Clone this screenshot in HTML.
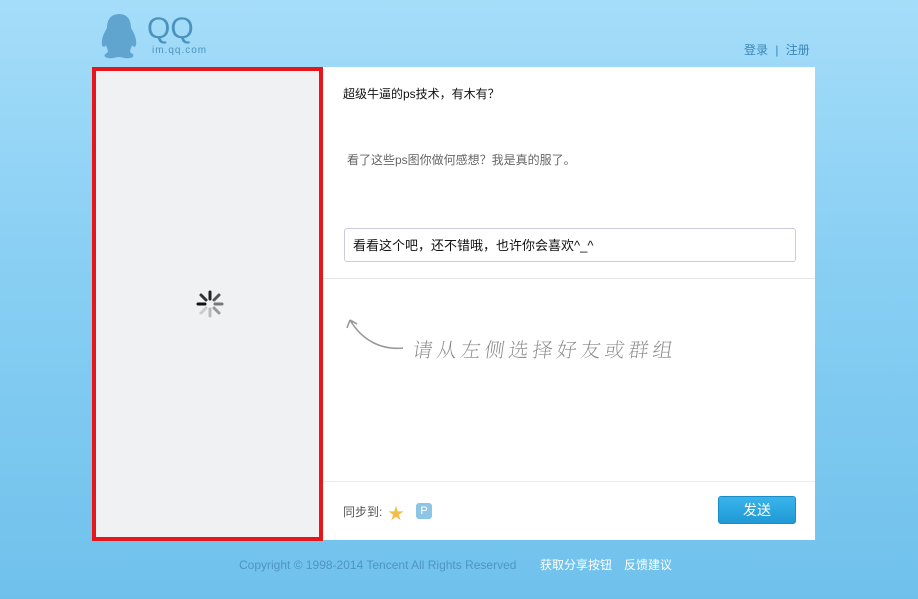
<!DOCTYPE html>
<html><head><meta charset="utf-8"><style>
*{margin:0;padding:0;box-sizing:border-box}
body{width:918px;height:599px;overflow:hidden;position:relative;background:linear-gradient(#a5ddf9,#8bd0f4 40%,#6fc1ec);font-family:"Liberation Sans","Noto Sans CJK SC",sans-serif;font-size:12px}
.abs{position:absolute}
</style></head><body>
<svg class="abs" style="left:98px;top:13px" width="42" height="46" viewBox="0 0 42 46"><path d="M21 1C12 1 9 8 9 15C6 20 3 26 4 32C5 35 7 34 8 32C9 36 11 38 9 40C6 41 5 44 10 45C14 46 18 44 21 44C24 44 28 46 32 45C37 44 36 41 33 40C31 38 33 36 34 32C35 34 37 35 38 32C39 26 36 20 33 15C33 8 30 1 21 1Z" fill="#5fa5cf"/></svg>
<div class="abs" style="left:147px;top:12px;font-size:30px;color:#4b93bf">QQ</div>
<div class="abs" style="left:152px;top:45px;font-size:10px;color:#4b93bf;letter-spacing:1px">im.qq.com</div>
<div class="abs" style="left:744px;top:41px;color:#3a86b8;font-size:12px">登录 <span style="margin:0 4px">|</span> 注册</div>
<div class="abs" style="left:92px;top:67px;width:723px;height:473px;background:#fff"></div>
<div class="abs" style="left:92px;top:67px;width:231px;height:474px;background:#f0f1f2;border:4px solid #e5161c"></div>
<svg class="abs" style="left:193px;top:287px" width="34" height="34" viewBox="-17 -17 34 34"><g stroke-width="3" stroke-linecap="round">
<line x1="0" y1="-5" x2="0" y2="-12" stroke="#222"/><line x1="4" y1="-4" x2="9" y2="-9" stroke="#555"/><line x1="5" y1="0" x2="12" y2="0" stroke="#777"/><line x1="4" y1="4" x2="9" y2="9" stroke="#999"/><line x1="0" y1="5" x2="0" y2="12" stroke="#bbb"/><line x1="-4" y1="4" x2="-9" y2="9" stroke="#ccc"/><line x1="-5" y1="0" x2="-12" y2="0" stroke="#111"/><line x1="-4" y1="-4" x2="-9" y2="-9" stroke="#333"/></g></svg>
<div class="abs" style="left:343px;top:85px;color:#111">超级牛逼的ps技术，有木有？</div>
<div class="abs" style="left:347px;top:151px;color:#666">看了这些ps图你做何感想？我是真的服了。</div>
<div class="abs" style="left:344px;top:228px;width:452px;height:34px;border:1px solid #ccd;border-radius:3px;padding:6px 8px;font-size:13px;color:#111">看看这个吧，还不错哦，也许你会喜欢^_^</div>
<div class="abs" style="left:323px;top:278px;width:492px;height:1px;background:#e6e6e6"></div>
<svg class="abs" style="left:343px;top:312px" width="70" height="42"><path d="M60 36C40 38 20 30 7 8M7 8L4 16M7 8L14 12" stroke="#999" stroke-width="1.6" fill="none"/></svg>
<div class="abs" style="left:413px;top:334px;font-size:20px;color:#888;font-family:'Noto Serif CJK SC',serif;font-weight:200;letter-spacing:4px;transform:skewX(-8deg)">请从左侧选择好友或群组</div>
<div class="abs" style="left:323px;top:481px;width:492px;height:1px;background:#ececec"></div>
<div class="abs" style="left:343px;top:503px;color:#555">同步到:</div>
<div class="abs" style="left:388px;top:500px;font-size:16px;color:#f2c04a">★</div>
<div class="abs" style="left:416px;top:503px;width:16px;height:16px;border-radius:3px;background:#8cc6e4;color:#fff;font-size:11px;text-align:center;line-height:16px">P</div>
<div class="abs" style="left:718px;top:496px;width:78px;height:28px;border-radius:3px;background:linear-gradient(#3ab4ea,#1f9ad6);border:1px solid #1a8cc6;color:#fff;font-size:14px;text-align:center;line-height:26px">发送</div>
<div class="abs" style="left:239px;top:557px;color:#4f95c2;font-size:12px;white-space:nowrap;line-height:16px">Copyright © 1998-2014 Tencent All Rights Reserved</div>
<div class="abs" style="left:540px;top:557px;color:#fff;font-size:12px;line-height:16px">获取分享按钮</div>
<div class="abs" style="left:624px;top:557px;color:#fff;font-size:12px;line-height:16px">反馈建议</div>
</body></html>
